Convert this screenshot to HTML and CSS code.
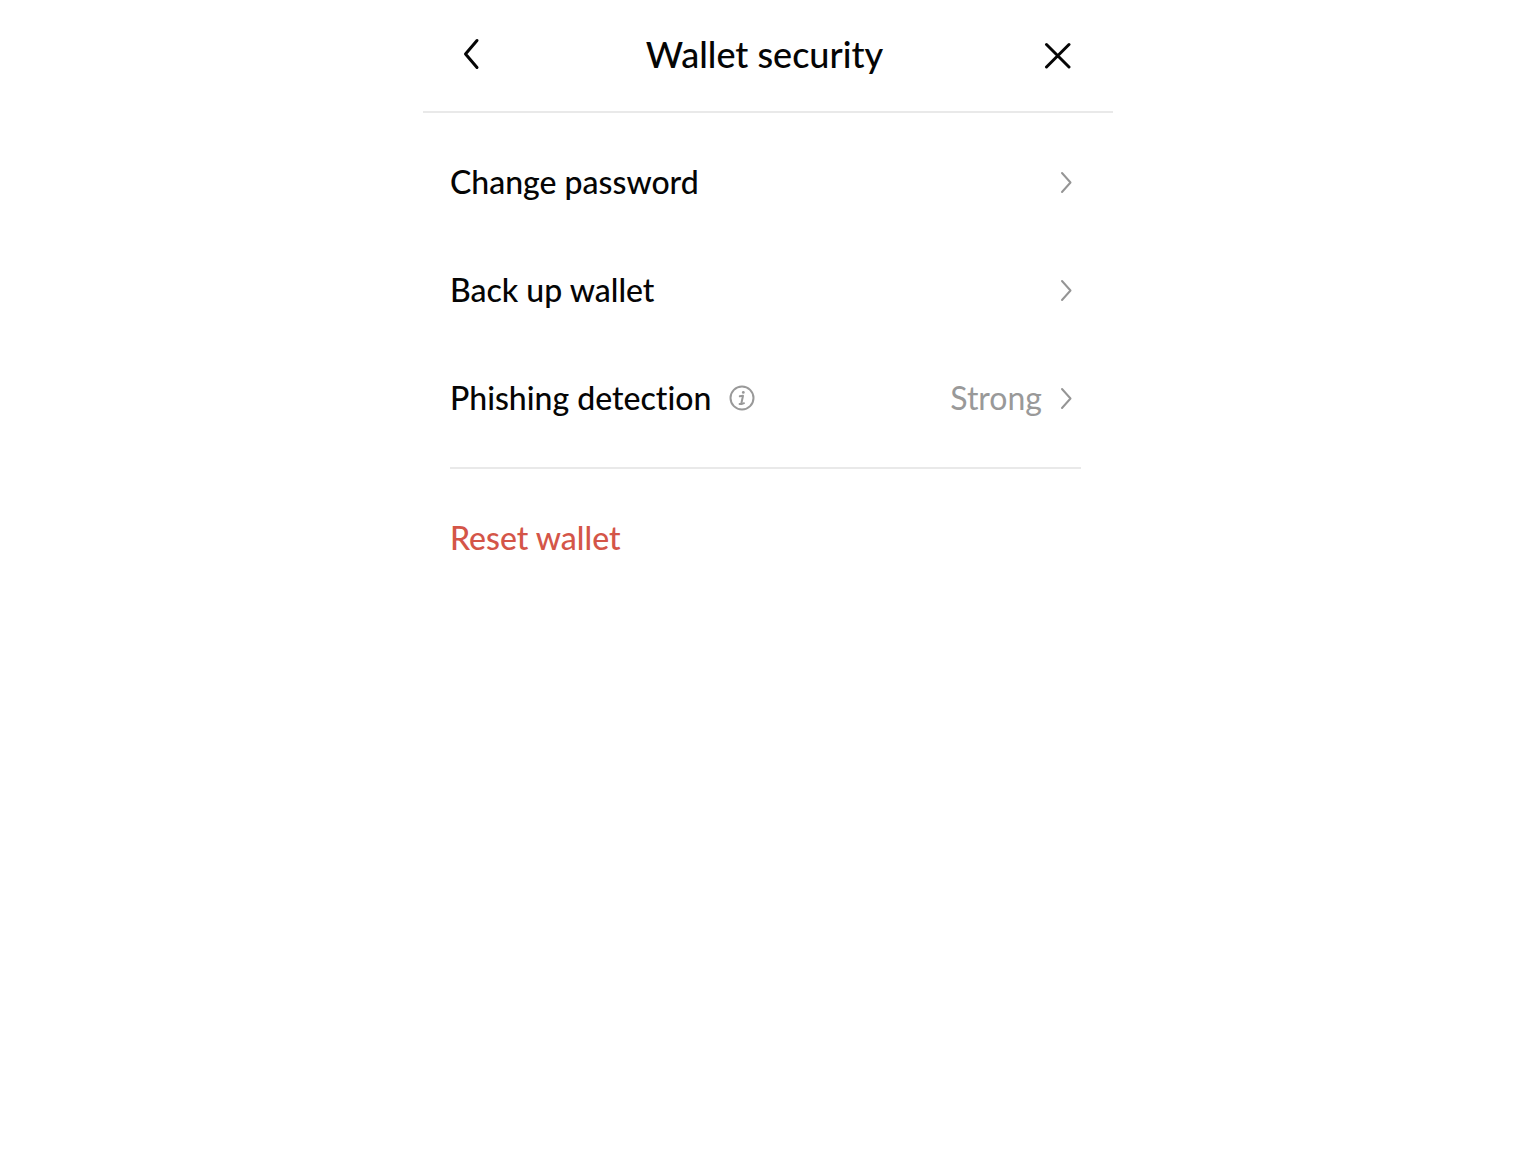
FILE: index.html
```html
<!DOCTYPE html>
<html lang="en">
<head>
<meta charset="utf-8">
<meta name="viewport" content="width=device-width, initial-scale=1">
<title>Wallet security</title>
<link rel="stylesheet" href="styles.css">
</head>
<body>
<main class="panel">
  <header class="header">
    <button class="icon-button" type="button" aria-label="Back">
      <svg width="20" height="32" viewBox="0 0 20 32"><path d="M16 2.500 4.500 16 16 29.500" /></svg>
    </button>
    <h1 class="title">Wallet security</h1>
    <button class="icon-button" type="button" aria-label="Close">
      <svg width="28" height="30" viewBox="0 0 28 30"><path d="M2.500 5.500 25 28M25 5.500 2.500 28" /></svg>
    </button>
  </header>
  <ul class="list">
    <li><a class="row" href="#password">
      <span class="label">Change password</span>
      <svg class="chevron" width="14" height="24" viewBox="0 0 14 24"><path d="M3 3 11.500 12.500 3 22" /></svg>
    </a></li>
    <li><a class="row" href="#backup">
      <span class="label">Back up wallet</span>
      <svg class="chevron" width="14" height="24" viewBox="0 0 14 24"><path d="M3 3 11.500 12.500 3 22" /></svg>
    </a></li>
    <li><a class="row" href="#phishing">
      <span class="label">Phishing detection</span>
      <svg class="info" width="26" height="26" viewBox="0 0 26 26"><circle cx="13" cy="13" r="11.500" /><path class="info-stem" d="M10.800 11.300 14 10.800 12.400 18.200Q12.400 19.400 15 18.200M10.600 19H13" /><circle class="info-dot" cx="14.300" cy="7.400" r="1.400" /></svg>
      <span class="value">Strong</span>
      <svg class="chevron" width="14" height="24" viewBox="0 0 14 24"><path d="M3 3 11.500 12.500 3 22" /></svg>
    </a></li>
  </ul>
  <div class="footer">
    <button class="row reset" type="button">Reset wallet</button>
  </div>
</main>
</body>
</html>
```
FILE: styles.css
```css
* {
  box-sizing: border-box;
}

body {
  margin: 0;
  background: #fff;
  color: #050505;
  font-family: Lato, "Liberation Sans", sans-serif;
  font-size: 32px;
  font-weight: 500;
  font-variant-ligatures: none;
  line-height: 40px;
}

.panel {
  max-width: 690px;
  margin: 0 auto;
}

.header {
  display: flex;
  align-items: center;
  justify-content: space-between;
  height: 113px;
  padding: 0 41px 4px 34px;
  border-bottom: 2px solid #e9e9e9;
}

.title {
  margin: 0;
  font-size: 36px;
  font-weight: 500;
}

.icon-button {
  display: flex;
  align-items: center;
  justify-content: center;
  width: 28px;
  height: 40px;
  padding: 0;
  border: 0;
  background: none;
  color: inherit;
}

svg {
  flex: none;
  fill: none;
  stroke: currentColor;
  stroke-linecap: round;
  stroke-linejoin: round;
  stroke-width: 3;
}

.list {
  margin: 0;
  padding: 15px 32px 15px 27px;
  list-style: none;
}

.row {
  display: flex;
  align-items: center;
  width: 100%;
  height: 108px;
  padding: 0 8px 0 0;
  color: inherit;
  text-decoration: none;
}

.label {
  margin-right: 18px;
}

.chevron {
  margin-left: auto;
  color: #959595;
  stroke-width: 2;
}

.info {
  color: #999;
  stroke-width: 2;
}

.info-dot {
  fill: currentColor;
  stroke: none;
}

.value {
  margin-left: auto;
  color: #999;
  font-weight: 400;
}

.value + .chevron {
  margin-left: 17px;
}

.footer {
  margin: 0 32px 0 27px;
  padding-top: 15px;
  border-top: 2px solid #e9e9e9;
}

.reset {
  border: 0;
  background: none;
  color: #d45548;
  font: inherit;
}
```
